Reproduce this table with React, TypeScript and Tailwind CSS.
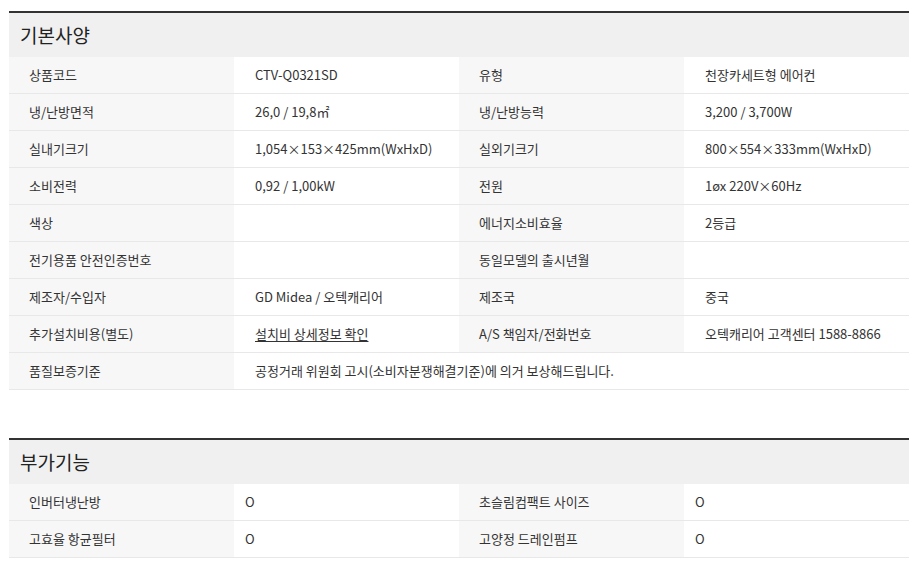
import React from "react";

type Cell = { label: string; value?: React.ReactNode; span?: boolean };

const basicRows: Cell[][] = [
  [
    { label: "상품코드", value: "CTV-Q0321SD" },
    { label: "유형", value: "천장카세트형 에어컨" },
  ],
  [
    { label: "냉/난방면적", value: "26,0 / 19,8㎡" },
    { label: "냉/난방능력", value: "3,200 / 3,700W" },
  ],
  [
    { label: "실내기크기", value: "1,054×153×425mm(WxHxD)" },
    { label: "실외기크기", value: "800×554×333mm(WxHxD)" },
  ],
  [
    { label: "소비전력", value: "0,92 / 1,00kW" },
    { label: "전원", value: "1øx 220V×60Hz" },
  ],
  [
    { label: "색상", value: "" },
    { label: "에너지소비효율", value: "2등급" },
  ],
  [
    { label: "전기용품 안전인증번호", value: "" },
    { label: "동일모델의 출시년월", value: "" },
  ],
  [
    { label: "제조자/수입자", value: "GD Midea / 오텍캐리어" },
    { label: "제조국", value: "중국" },
  ],
  [
    {
      label: "추가설치비용(별도)",
      value: <span className="underline underline-offset-2">설치비 상세정보 확인</span>,
    },
    { label: "A/S 책임자/전화번호", value: "오텍캐리어 고객센터 1588-8866" },
  ],
  [
    {
      label: "품질보증기준",
      value: "공정거래 위원회 고시(소비자분쟁해결기준)에 의거 보상해드립니다.",
      span: true,
    },
  ],
];

const extraRows: Cell[][] = [
  [
    { label: "인버터냉난방", value: "O" },
    { label: "초슬림컴팩트 사이즈", value: "O" },
  ],
  [
    { label: "고효율 항균필터", value: "O" },
    { label: "고양정 드레인펌프", value: "O" },
  ],
];

const SpecTable: React.FC<{ title: string; rows: Cell[][]; valuePad: string }> = ({
  title,
  rows,
  valuePad,
}) => (
  <section className="border-t-2 border-[#333]">
    <h2 className="h-[44px] flex items-center bg-[#f0f0f0] px-[11px] text-[19px] text-[#222] font-normal">
      {title}
    </h2>
    {rows.map((row, i) => (
      <div key={i} className="grid grid-cols-[225px_225px_225px_225px] h-[37px] border-b border-[#e8e8e8]">
        {row.map((cell, j) => (
          <React.Fragment key={j}>
            <div className="bg-[#f7f7f7] flex items-center pl-[20px] text-[#333]">{cell.label}</div>
            <div
              className={`flex items-center ${valuePad} text-[#333] ${cell.span ? "col-span-3" : ""}`}
            >
              {cell.value}
            </div>
          </React.Fragment>
        ))}
      </div>
    ))}
  </section>
);

export default function App() {
  return (
    <div
      className="w-[918px] h-[582px] bg-white px-[9px] pt-[11px] text-[13px]"
      style={{ fontFamily: '"Noto Sans CJK KR", "Noto Sans", sans-serif' }}
    >
      <div className="w-[900px] flex flex-col gap-[48px]">
        <SpecTable title="기본사양" rows={basicRows} valuePad="pl-[21px]" />
        <SpecTable title="부가기능" rows={extraRows} valuePad="pl-[11px]" />
      </div>
    </div>
  );
}
